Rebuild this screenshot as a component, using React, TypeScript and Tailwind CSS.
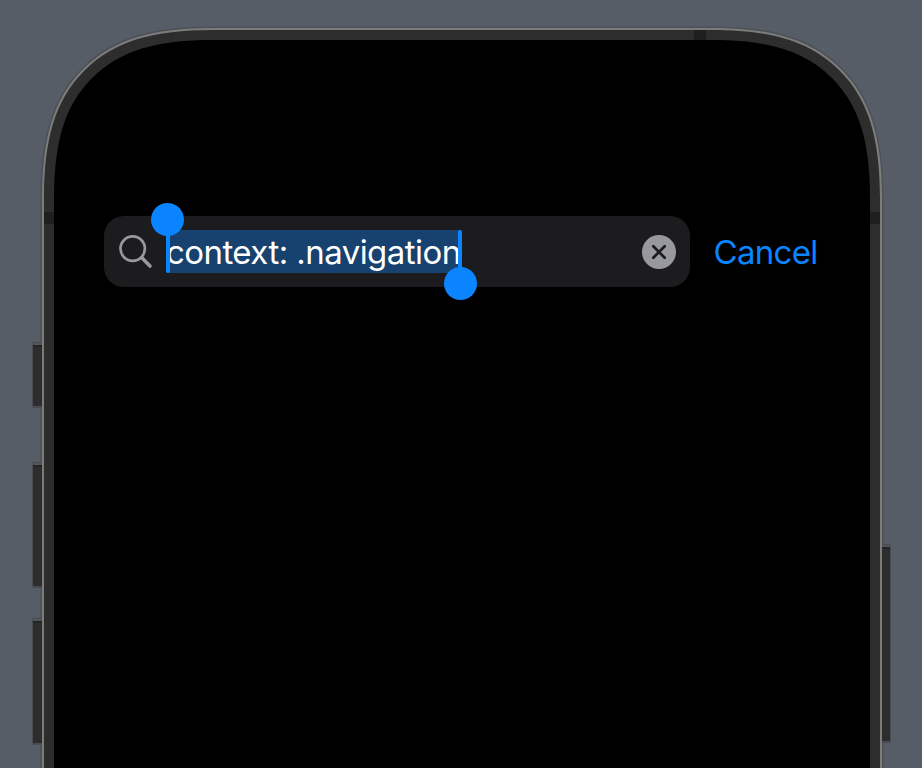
import React from "react";

/** Top outline of a device with continuous corners, open past the bottom edge. */
function outline(l: number, t: number, r: number, k: number): string {
  const left = (x: number, y: number) => `${l + x * k} ${t + y * k}`;
  const right = (x: number, y: number) => `${r - x * k} ${t + y * k}`;
  return [
    `M${l} 800 L${left(0, 1.25)}`,
    `C${left(0, 0.81)} ${left(0.08, 0.52)} ${left(0.3, 0.3)}`,
    `C${left(0.52, 0.08)} ${left(0.81, 0)} ${left(1.25, 0)}`,
    `L${right(1.25, 0)}`,
    `C${right(0.81, 0)} ${right(0.52, 0.08)} ${right(0.3, 0.3)}`,
    `C${right(0.08, 0.52)} ${right(0, 0.81)} ${right(0, 1.25)}`,
    `L${r} 800Z`,
  ].join(" ");
}

function SideButton({ x, y, height }: { x: number; y: number; height: number }) {
  return (
    <g>
      <rect x={x - 1} y={y - 3} width="12" height={height + 5} rx="2" fill="#484c52" />
      <rect x={x} y={y - 2} width="10" height="2" fill="#55585b" />
      <rect x={x} y={y} width="10" height={height} rx="1" fill="#2d2d2d" />
      <rect x={x} y={y} width="10" height="1.5" fill="#202122" />
    </g>
  );
}

function DeviceFrame() {
  return (
    <svg className="absolute inset-0" width="922" height="768" viewBox="0 0 922 768" aria-hidden="true">
      <path d={outline(40.5, 26.5, 883.5, 138)} fill="#4c5159" />
      <SideButton x={33} y={345} height={61} />
      <SideButton x={33} y={465} height={121} />
      <SideButton x={33} y={621} height={122} />
      <SideButton x={880} y={547} height={194} />
      <path d={outline(42, 28, 882, 137)} fill="#7c7c7b" />
      <path d={outline(44, 30, 880, 135)} fill="#2d2d2d" />
      <path d="M694 30h12v10h-12zM44 212h10v12H44zM870 212h10v12h-10z" fill="#1f1f1f" />
      <path d={outline(54, 40, 870, 127)} fill="#000" />
    </svg>
  );
}

function SearchIcon() {
  return (
    <svg className="shrink-0" width="34" height="34" viewBox="0 0 34 34" fill="none" stroke="#98989f" aria-hidden="true">
      <circle cx="13.7" cy="13.6" r="12.2" strokeWidth="2.7" />
      <path d="M22.6 22.6L31 31" strokeWidth="3.6" strokeLinecap="round" />
    </svg>
  );
}

function ClearIcon() {
  return (
    <svg width="34" height="34" viewBox="0 0 34 34" aria-hidden="true">
      <circle cx="17" cy="17" r="17" fill="#98989f" />
      <path d="M11.3 11.3l11.4 11.4M22.7 11.3L11.3 22.7" stroke="#1c1c1e" strokeWidth="2.7" strokeLinecap="round" />
    </svg>
  );
}

export default function App() {
  return (
    <div className="relative h-[768px] w-[922px] overflow-hidden bg-[#565d66] font-['Inter',sans-serif]">
      <DeviceFrame />
      <main className="relative pt-[216px] pl-[104px]">
        <div className="flex h-[71px] items-center">
          <div className="flex h-[71px] w-[586px] items-center rounded-[20px] bg-[#1c1c1e] pr-[14px] pl-[15px]">
            <SearchIcon />
            <div className="relative ml-[14px] flex h-[43px] w-[294px] items-center bg-[#17416e]">
              <span className="-ml-px pt-[2px] text-[33px] leading-[43px] tracking-[-0.56px] whitespace-nowrap text-white">
                context: .navigation
              </span>
              <span className="absolute top-0 -left-[1.5px] h-[43px] w-[4px] rounded-sm bg-[#0b84ff]" />
              <span className="absolute -top-[27.5px] -left-[16px] size-[33px] rounded-full bg-[#0b84ff]" />
              <span className="absolute top-0 -right-px h-[43px] w-[4px] rounded-sm bg-[#0b84ff]" />
              <span className="absolute top-[37px] -right-[16px] size-[33px] rounded-full bg-[#0b84ff]" />
            </div>
            <button className="ml-auto" aria-label="Clear text">
              <ClearIcon />
            </button>
          </div>
          <button className="ml-[23.5px] pt-[2px] text-[33px] leading-[43px] tracking-[-0.7px] text-[#0b84ff]">Cancel</button>
        </div>
      </main>
    </div>
  );
}
